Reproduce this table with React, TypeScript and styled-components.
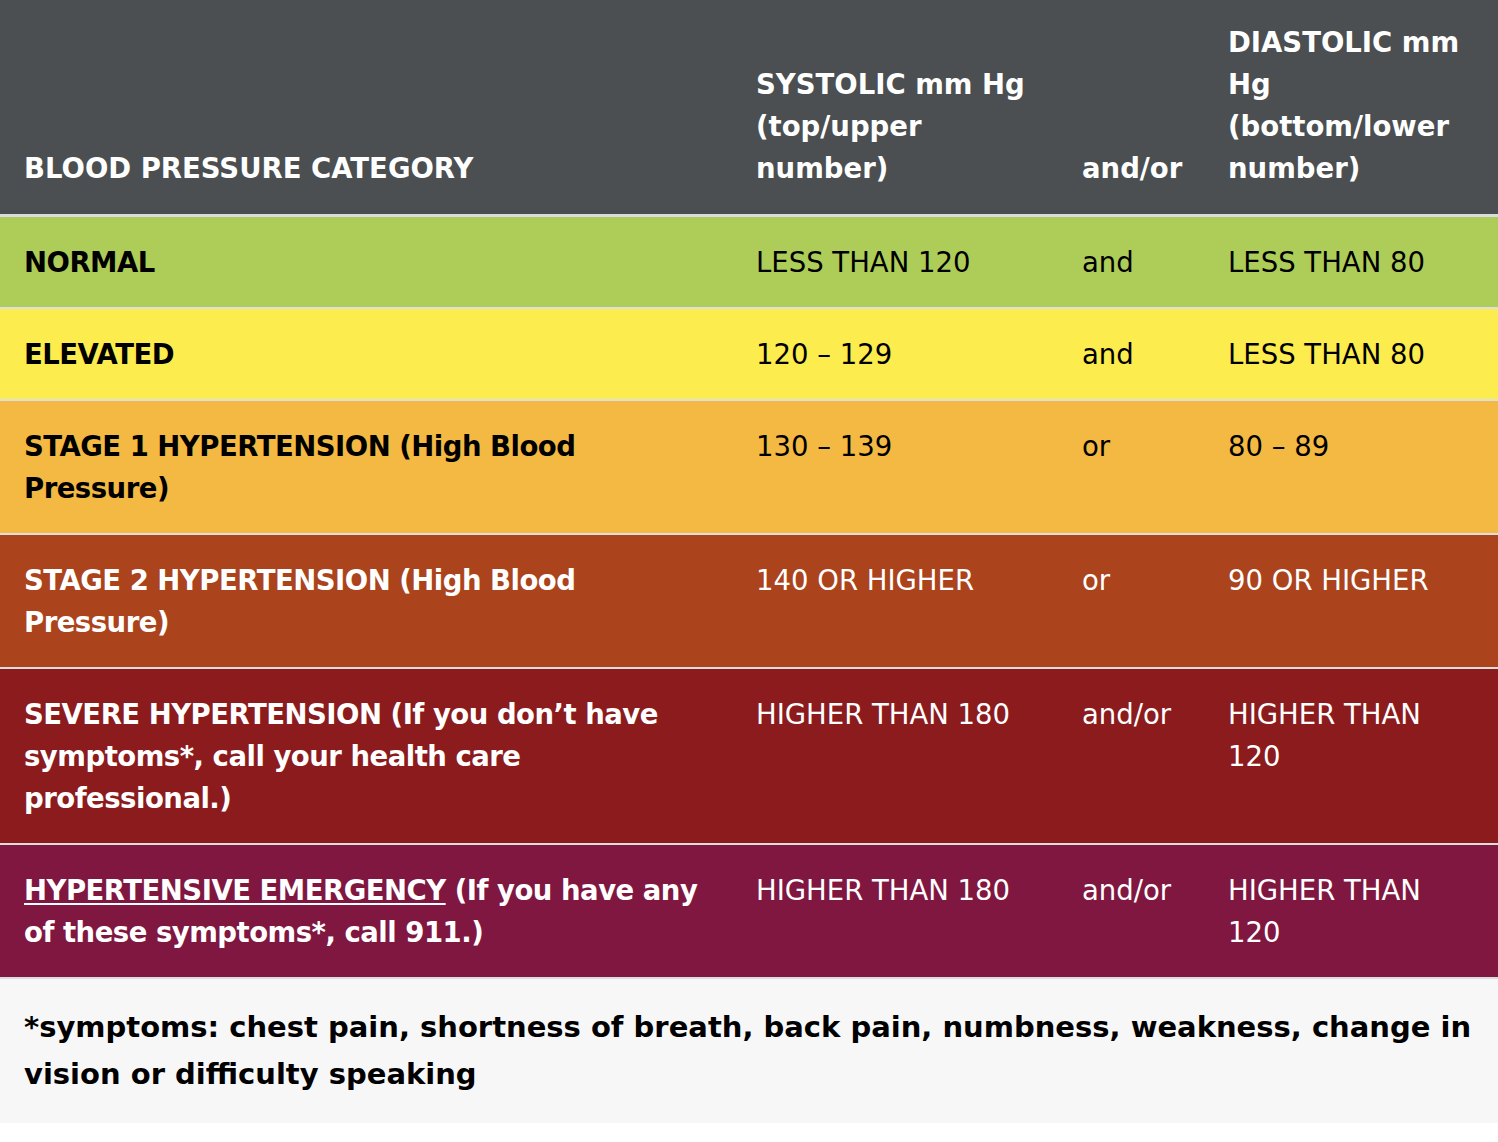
import React from 'react';
import styled, {createGlobalStyle} from 'styled-components';

const GlobalStyle = createGlobalStyle`
  html, body {
    margin: 0;
    padding: 0;
    background: #ffffff;
  }

  body {
    font-family: 'DejaVu Sans', 'Liberation Sans', sans-serif;
  }
`;

interface IRow {
  link?: string;
  category: string;
  systolic: string;
  join: string;
  diastolic: string;
  bg: string;
  light?: boolean;
}

const rows: IRow[] = [
  {category: 'NORMAL', systolic: 'LESS THAN 120', join: 'and', diastolic: 'LESS THAN 80', bg: '#adcd58'},
  {category: 'ELEVATED', systolic: '120 – 129', join: 'and', diastolic: 'LESS THAN 80', bg: '#fcec4e'},
  {
    category: 'STAGE 1 HYPERTENSION (High Blood Pressure)',
    systolic: '130 – 139',
    join: 'or',
    diastolic: '80 – 89',
    bg: '#f3b942',
  },
  {
    category: 'STAGE 2 HYPERTENSION (High Blood Pressure)',
    systolic: '140 OR HIGHER',
    join: 'or',
    diastolic: '90 OR HIGHER',
    bg: '#ab431d',
    light: true,
  },
  {
    category: 'SEVERE HYPERTENSION (If you don’t have symptoms*, call your health care professional.)',
    systolic: 'HIGHER THAN 180',
    join: 'and/or',
    diastolic: 'HIGHER THAN 120',
    bg: '#8b1b1d',
    light: true,
  },
  {
    link: 'HYPERTENSIVE EMERGENCY',
    category: ' (If you have any of these symptoms*, call 911.)',
    systolic: 'HIGHER THAN 180',
    join: 'and/or',
    diastolic: 'HIGHER THAN 120',
    bg: '#801740',
    light: true,
  },
];

const App = () => {
  return (
    <>
      <GlobalStyle />
      <Wrapper>
        <Table>
          <colgroup>
            <col style={{width: 732}} />
            <col style={{width: 326}} />
            <col style={{width: 146}} />
            <col style={{width: 294}} />
          </colgroup>
          <thead>
            <HeadRow>
              <HeadCell>BLOOD PRESSURE CATEGORY</HeadCell>
              <HeadCell>SYSTOLIC mm Hg (top/upper number)</HeadCell>
              <HeadCell>and/or</HeadCell>
              <HeadCell>DIASTOLIC mm Hg (bottom/lower number)</HeadCell>
            </HeadRow>
          </thead>
          <tbody>
            {rows.map((row, i) => (
              <BodyRow key={i} $bg={row.bg} $light={row.light}>
                <CategoryCell>
                  {row.link && <CategoryLink href="#">{row.link}</CategoryLink>}
                  {row.category}
                </CategoryCell>
                <Cell>{row.systolic}</Cell>
                <Cell>{row.join}</Cell>
                <Cell>{row.diastolic}</Cell>
              </BodyRow>
            ))}
          </tbody>
        </Table>
        <Footnote>
          *symptoms: chest pain, shortness of breath, back pain, numbness, weakness, change in vision or difficulty
          speaking
        </Footnote>
      </Wrapper>
    </>
  );
};

export default App;

const Wrapper = styled.div`
  width: 1498px;
`;

const Table = styled.table`
  width: 100%;
  border-collapse: collapse;
  table-layout: fixed;
  font-size: 27.5px;
  line-height: 42px;
`;

const HeadRow = styled.tr`
  background: #4b4f51;
  border-bottom: 3px solid #dcdddf;
`;

const HeadCell = styled.th`
  padding: 21px 24px 25px;
  color: #ffffff;
  font-weight: 700;
  text-align: left;
  vertical-align: bottom;
`;

const BodyRow = styled.tr<{$bg: string; $light?: boolean}>`
  background: ${({$bg}) => $bg};
  color: ${({$light}) => ($light ? '#ffffff' : '#000000')};

  &:not(:first-child) {
    border-top: 2px solid #dedede;
  }
`;

const Cell = styled.td`
  padding: 24px;
  vertical-align: top;
  font-weight: 400;
`;

const CategoryCell = styled(Cell)`
  font-weight: 700;
  letter-spacing: -0.5px;
`;

const CategoryLink = styled.a`
  color: inherit;
  text-decoration: underline;
  text-underline-offset: 3px;
  text-decoration-thickness: 2px;
`;

const Footnote = styled.p`
  margin: 0;
  border-top: 2px solid #dcdcdf;
  background: #f7f7f7;
  padding: 25px 24px;
  font-size: 29px;
  line-height: 47px;
  font-weight: 700;
  color: #000000;
`;
